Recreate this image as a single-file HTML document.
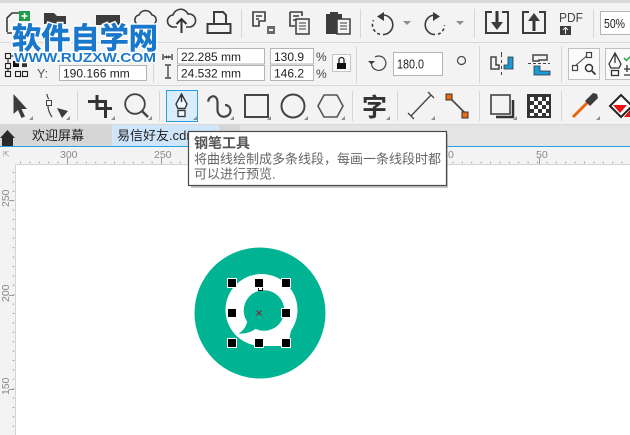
<!DOCTYPE html>
<html><head><meta charset="utf-8">
<style>
html,body{margin:0;padding:0;width:630px;height:435px;overflow:hidden;background:#fff}
svg{display:block;position:absolute;left:0;top:0}
text{font-family:"Liberation Sans","Noto Sans CJK SC",sans-serif}
.v{font-size:12.5px;fill:#222}
.ic{fill:none;stroke:#3c3c3c;stroke-width:1.6}
.d{fill:#3c3c3c;stroke:none}
.sep{stroke:#d6d6d6;stroke-width:1}
.box{fill:#fff;stroke:#b4b4b4;stroke-width:1}
.tri{fill:#8e8e8e}
.rl{font-size:10.5px;fill:#8a8a8a}
</style></head><body>
<svg width="630" height="435" viewBox="0 0 630 435">
<rect width="630" height="435" fill="#f3f3f3"/>
<rect width="630" height="3" fill="#d9d9d9"/>
<rect y="42" width="630" height="1" fill="#d8d8d8"/>
<rect y="85" width="630" height="1" fill="#d8d8d8"/>
<rect y="124" width="630" height="1" fill="#d8d8d8"/>

<!-- row 1 -->
<path class="ic" d="M7 32V18l5-5h10M7 33h5"/>
<rect x="19" y="11" width="11" height="10" fill="#1f9d48"/>
<path d="M24.500 13v6M21.500 16h6" stroke="#fff" stroke-width="1.500"/>
<path class="d" d="M44 13h10l3 3h9v8H44z"/>
<path class="d" d="M96 15h24v10H96z"/>
<path class="ic" d="M137 24a5 5 0 0 1 2-9 7 7 0 0 1 13 0 5 5 0 0 1 2 9"/>
<path class="ic" d="M177 27h-3a6 6 0 0 1-1-12 8 8 0 0 1 15-1 6.500 6.500 0 0 1 2 13h-4"/>
<path d="M181.500 33V20M176.500 24l5-5 5 5" fill="none" stroke="#333" stroke-width="2"/>
<path class="ic" style="stroke-width:2" d="M214 24V12h9l3 3v9M207.500 24v9h23v-9z"/>
<path class="sep" d="M241.500 9v29"/>
<path class="ic" d="M253 12h12v9h-6v5h-6zM256 16h6M256 19h3"/>
<path class="d" d="M267 26h8v8h-8z" opacity=".75"/><path d="M269 29h4v2h-4z" fill="#f3f3f3"/>
<path class="ic" d="M290 12h12v4M290 12v14h5M293 16h6M293 20h3"/>
<rect x="296" y="19" width="13" height="15" fill="#f3f3f3" stroke="#3c3c3c" stroke-width="1.500"/>
<path d="M299 23h7M299 26h7M299 29h7" stroke="#3c3c3c"/>
<path class="d" d="M326 14h4v-2h8v2h4v20h-16z"/>
<rect x="337" y="19" width="13" height="15" fill="#f3f3f3" stroke="#3c3c3c" stroke-width="1.500"/>
<path d="M340 23h7M340 26h7M340 29h7" stroke="#3c3c3c"/>
<path class="sep" d="M360.500 9v29"/>
<path d="M383 15a9.800 9.800 0 0 1 0 19.600" fill="none" stroke="#3c3c3c" stroke-width="1.600"/>
<path d="M380 34.300a9.800 9.800 0 0 1-6.500-14" fill="none" stroke="#3c3c3c" stroke-width="1.600" stroke-dasharray="3 2.500"/>
<path class="d" d="M384 12v9l-7-4.500z"/>
<path class="tri" d="M403 21h8l-4 4z"/>
<path d="M435 15a9.800 9.800 0 0 0 0 19.600" fill="none" stroke="#3c3c3c" stroke-width="1.600"/>
<path d="M438 34.300a9.800 9.800 0 0 0 6.500-9" fill="none" stroke="#3c3c3c" stroke-width="1.600" stroke-dasharray="3 2.500"/>
<path class="d" d="M433 12v9l7-4.500z"/>
<path class="tri" d="M456 21h8l-4 4z"/>
<path class="sep" d="M474.500 9v29"/>
<path class="ic" style="stroke-width:2" d="M492 12h-6v21h22V12h-6"/>
<path d="M497 11v13" stroke="#333" stroke-width="3"/><path class="d" d="M491 22h12l-6 8z"/>
<path class="ic" style="stroke-width:2" d="M529 12h-6v21h22V12h-6"/>
<path d="M534 20v11" stroke="#333" stroke-width="3"/><path class="d" d="M528 21h12l-6-8z"/>
<text x="559" y="22" font-size="12.500" fill="#444" textLength="24" lengthAdjust="spacingAndGlyphs">PDF</text>
<path class="d" d="M560 26h11v9h-11z"/><path d="M565.500 27v7M563 30l2.500-2.500 2.500 2.500" stroke="#f3f3f3" fill="none"/>
<path class="sep" d="M593.500 9v29"/>
<rect x="600.500" y="11.500" width="40" height="23" class="box"/>
<text x="604" y="28" class="v" style="font-size:12.500px" textLength="21" lengthAdjust="spacingAndGlyphs">50%</text>

<!-- row 2 -->
<g fill="none" stroke="#222" stroke-width="1.100">
<rect x="5.500" y="53.500" width="5" height="5"/><rect x="5.500" y="63.500" width="5" height="5"/><rect x="5.500" y="71.500" width="5" height="5"/>
<rect x="15.500" y="71.500" width="5" height="5"/><rect x="22.500" y="71.500" width="5" height="5"/>
<path d="M10 56h6M8 58v5M8 68v3"/>
</g>
<rect x="13" y="61" width="6" height="6" fill="#111"/><rect x="22" y="61" width="5" height="6" fill="#333"/>
<text x="37" y="78" font-size="12.500" fill="#555">Y:</text>
<rect x="59.500" y="65.500" width="87" height="15" class="box"/>
<text x="63" y="77.500" class="v" style="font-size:12px">190.166 mm</text>
<path class="sep" d="M153.500 47v36"/>
<path d="M163 54v6M172 54v6M164 57h7" stroke="#444" stroke-width="1.400"/>
<path d="M165 57l2-2v4zM170 57l-2-2v4z" fill="#444"/>
<path d="M165 65h6M165 78h6M168 66v11" stroke="#444" stroke-width="1.400"/>
<rect x="177.500" y="48.500" width="87" height="15.500" class="box"/>
<rect x="177.500" y="65.500" width="87" height="15" class="box"/>
<text x="181" y="61" class="v" style="font-size:12px">22.285 mm</text>
<text x="181" y="77.500" class="v" style="font-size:12px">24.532 mm</text>
<rect x="270.500" y="48.500" width="43" height="15.500" class="box"/>
<rect x="270.500" y="65.500" width="43" height="15" class="box"/>
<text x="274" y="61" class="v" style="font-size:12px">130.9</text>
<text x="274" y="77.500" class="v" style="font-size:12px">146.2</text>
<text x="316" y="61" font-size="12" fill="#444">%</text>
<text x="316" y="78" font-size="12" fill="#444">%</text>
<rect x="332.500" y="54.500" width="18" height="17" fill="#fafafa" stroke="#c4c4c4"/>
<path d="M339 63v-3a2.500 2.500 0 0 1 5 0v3" fill="none" stroke="#222" stroke-width="1.300"/>
<rect x="337" y="63" width="9" height="6" fill="#111"/>
<path class="sep" d="M356.500 46v37"/>
<path d="M375 57a7.200 7.200 0 1 1-3.500 7" fill="none" stroke="#444" stroke-width="1.200"/>
<path class="d" d="M368 61h7l-3.500 3.500z"/>
<rect x="393.500" y="52.500" width="49" height="23" class="box"/>
<text x="397" y="68.500" class="v" style="font-size:13px" textLength="27" lengthAdjust="spacingAndGlyphs">180.0</text>
<circle cx="461.500" cy="60.500" r="4" fill="none" stroke="#444" stroke-width="1.200"/>
<path class="sep" d="M479.500 46v37"/>
<path d="M491 57h5v8h3v4h-8z" fill="none" stroke="#444" stroke-width="1.500"/>
<path d="M501.500 52v5M501.500 60v3M501.500 66v3M501.500 72v3" stroke="#444"/>
<path d="M508 57h5v12h-9v-4h4z" fill="#1c9ad6" stroke="#333" stroke-width=".8"/>
<path d="M528 63.500h3M533 63.500h3M538 63.500h3M543 63.500h3M548 63.500h2" stroke="#444"/>
<path d="M533 55h14v5h-8v1h-6z" fill="none" stroke="#444" stroke-width="1.500"/>
<path d="M534 66h6v5h10v4h-16z" fill="#1c9ad6" stroke="#333" stroke-width=".8"/>
<path class="sep" d="M561.500 46v37"/>
<rect x="568.500" y="48.500" width="31" height="31" fill="#fafafa" stroke="#c0c0c0"/>
<path d="M575 66l14-12" stroke="#444"/>
<rect x="572.500" y="65.500" width="5" height="5" fill="#fafafa" stroke="#444" stroke-width="1.200"/>
<rect x="586.500" y="52.500" width="5" height="5" fill="#fafafa" stroke="#444" stroke-width="1.200"/>
<circle cx="589" cy="68" r="3.500" fill="none" stroke="#333" stroke-width="1.500"/><path d="M592 71l3.500 3.500" stroke="#333" stroke-width="1.800"/>
<rect x="605.500" y="48.500" width="31" height="31" fill="#fafafa" stroke="#c0c0c0"/>
<path d="M615 53l-6 11 2 4h8l2-4zM615 53v10" fill="none" stroke="#333" stroke-width="1.300"/>
<rect x="611.500" y="70.500" width="7" height="5" fill="none" stroke="#333" stroke-width="1.300"/>
<path d="M624 58l2.500 2.500 4-4" fill="none" stroke="#21a045" stroke-width="1.500"/>
<path d="M627 65v7M624 69h6M624 75h6" stroke="#333" stroke-width="1.300"/>

<!-- row 3 -->
<path class="d" d="M13.500 94v20l4.500-4 3.500 8 3.500-1.500-3.500-7.500h5.500z"/>
<path class="tri" d="M33 120h-4l4-4z"/>
<path d="M47 94c0 2 1 4 2 5M48 106c0 4 2 8 4 11" fill="none" stroke="#444" stroke-width="1.200"/>
<rect x="46.500" y="100.500" width="5" height="5" fill="#f3f3f3" stroke="#444"/>
<path class="d" d="M57 108l11 3-6 7z"/>
<path class="tri" d="M70 120h-4l4-4z"/>
<path class="sep" d="M77.500 91v30"/>
<path d="M97 95v13.500h15M88 101.500h17.500V118" fill="none" stroke="#333" stroke-width="3"/>
<path class="tri" d="M115 120h-4l4-4z"/>
<circle cx="135" cy="104" r="9.800" fill="none" stroke="#444" stroke-width="1.800"/>
<path d="M142 111l6 6" stroke="#444" stroke-width="2.500"/>
<path class="tri" d="M152 120h-4l4-4z"/>
<path class="sep" d="M159.500 91v30"/>
<rect x="166.500" y="90.500" width="31" height="31" fill="#d9edfc" stroke="#29a0e0" stroke-width="1"/>
<path d="M181.500 94l-5.500 10 2 4.500h7l2-4.500zM181.500 94v8" fill="#eef7fd" stroke="#333" stroke-width="1.400"/>
<rect x="178" y="110.500" width="7" height="6" fill="#eef7fd" stroke="#333" stroke-width="1.300"/>
<path class="tri" d="M197 120h-4l4-4z"/>
<path d="M208.300 101.700C208 96 217 93 217.500 102V110C218 120 231 118 230.500 110C230 107 228 105 225 105" fill="none" stroke="#444" stroke-width="2.200"/>
<path class="tri" d="M234 120h-4l4-4z"/>
<rect x="245" y="95" width="23" height="22" fill="none" stroke="#444" stroke-width="2"/>
<path class="tri" d="M271 120h-4l4-4z"/>
<circle cx="293" cy="106" r="11.500" fill="none" stroke="#444" stroke-width="2"/>
<path class="tri" d="M308 120h-4l4-4z"/>
<path d="M325 106l6-11h13l6 11-6 11h-13z" fill="none" stroke="#555" stroke-width="1.600" transform="translate(-7 0)"/>
<path class="tri" d="M345 120h-4l4-4z"/>
<path class="sep" d="M352.500 91v30"/>
<text x="362" y="116" font-size="25" font-weight="bold" fill="#333">字</text>
<path class="tri" d="M390 120h-4l4-4z"/>
<path class="sep" d="M397.500 91v30"/>
<path d="M411 116l20-21M408 113l6 6M428 92l6 6" stroke="#444" stroke-width="1.300" fill="none"/>
<path class="tri" d="M435 120h-4l4-4z"/>
<path d="M448 96l18 18" stroke="#444" stroke-width="1.600"/>
<rect x="446" y="94" width="6" height="6" fill="#ee6a0c" stroke="#333"/><rect x="462" y="112" width="6" height="6" fill="#ee6a0c" stroke="#333"/>
<path class="sep" d="M479.500 91v30"/>
<rect x="491" y="95" width="19" height="19" fill="none" stroke="#444" stroke-width="1.600"/>
<path d="M496 117h17V100" fill="none" stroke="#333" stroke-width="2.500"/>
<path class="tri" d="M517 120h-4l4-4z"/>
<rect x="527" y="94" width="24" height="24" fill="#333"/>
<g fill="#fff"><rect x="530" y="97" width="4" height="4"/><rect x="538" y="97" width="4" height="4"/><rect x="546" y="97" width="3" height="4"/><rect x="534" y="101" width="4" height="4"/><rect x="542" y="101" width="4" height="4"/><rect x="530" y="105" width="4" height="4"/><rect x="538" y="105" width="4" height="4"/><rect x="546" y="105" width="3" height="4"/><rect x="534" y="109" width="4" height="4"/><rect x="542" y="109" width="4" height="4"/><rect x="530" y="113" width="4" height="3"/><rect x="538" y="113" width="4" height="3"/><rect x="546" y="113" width="3" height="3"/></g>
<path class="sep" d="M561.500 91v30"/>
<path d="M573 117l15-15" stroke="#e8660e" stroke-width="3"/>
<path class="d" d="M585 101l8-8 4 1 1 4-8 8z"/>
<path class="tri" d="M600 120h-4l4-4z"/>
<path d="M610 106l11-11 11 11-11 11z" fill="#fff" stroke="#222" stroke-width="2"/>
<path d="M613 105h14l-7 8z" fill="#e81010"/><path d="M624 117l6-7v7z" fill="#e81010"/>

<!-- tabs -->
<rect y="125" width="630" height="21" fill="#e4e4e4"/>
<rect y="125" width="112" height="21" fill="#d6d6d6"/>
<rect x="113" y="125" width="106" height="21" fill="#cfe5fb"/>
<rect x="219" y="125" width="21" height="21" fill="#d6d6d6"/>
<rect y="146" width="630" height="1" fill="#27a0dc"/>
<path d="M0 138l7.500-8 7.500 8h-2v8H2v-8z" fill="#2a2a2a"/>
<text x="32" y="140" font-size="13" fill="#222">欢迎屏幕</text>
<text x="117" y="140" font-size="13" fill="#222">易信好友.cdr</text>

<!-- ruler -->
<rect y="147" width="630" height="18" fill="#f3f3f3"/>
<text x="3" y="157" font-size="8" fill="#999">⇱</text>
<text x="60" y="158" class="rl">300</text>
<text x="154" y="158" class="rl">250</text>
<text x="448" y="158" class="rl">0</text>
<text x="536" y="158" class="rl">50</text>
<path d="M67.500 158v6M161.500 158v6M539.500 158v6" stroke="#999"/>
<path d="M20 162.500H630" stroke="#9a9a9a" stroke-dasharray="1 8.400" stroke-width="1.500"/>
<rect x="15" y="164" width="615" height="271" fill="#fff"/>
<rect x="15" y="164" width="615" height="1" fill="#d4d4d4"/>
<rect x="15" y="164" width="1" height="271" fill="#d4d4d4"/>
<path d="M13.500 172V435" stroke="#9a9a9a" stroke-dasharray="1 8.400" stroke-width="1.500"/>
<path d="M9 200.500h5M9 295.500h5M9 389.500h5" stroke="#999"/>
<text transform="translate(9 207) rotate(-90)" class="rl">250</text>
<text transform="translate(9 302) rotate(-90)" class="rl">200</text>
<text transform="translate(9 395) rotate(-90)" class="rl">150</text>

<!-- logo -->
<circle cx="260" cy="313" r="65.500" fill="#00b493"/>
<circle cx="261.500" cy="310" r="36" fill="#fff"/>
<path d="M261 346H288L291 330L275 335z" fill="#fff"/>
<circle cx="264" cy="310.500" r="20.300" fill="#00b493"/>
<path d="M247 322C246 327 243 331 238.500 333.500C245 334 251 332.500 256 328.500z" fill="#00b493"/>
<path d="M258.500 288v2.500h4V288" fill="none" stroke="#111" stroke-width="1"/>
<path d="M256.500 310.500l5 5M261.500 310.500l-5 5" stroke="#7a2c3c" stroke-width="1.200"/>
<g fill="#000" stroke="#fff" stroke-width="1">
<rect x="227.500" y="278.500" width="9" height="9"/><rect x="254.500" y="278.500" width="9" height="9"/><rect x="281.500" y="278.500" width="9" height="9"/>
<rect x="227.500" y="308.500" width="9" height="9"/><rect x="281.500" y="308.500" width="9" height="9"/>
<rect x="227.500" y="338.500" width="9" height="9"/><rect x="254.500" y="338.500" width="9" height="9"/><rect x="281.500" y="338.500" width="9" height="9"/>
</g>

<!-- tooltip -->
<rect x="191" y="134" width="257" height="54" fill="#999" opacity=".55"/>
<rect x="188.500" y="131.500" width="258" height="54" fill="#fff" stroke="#4a4a4a" stroke-width="1.200"/>
<text x="194" y="148" font-size="14" font-weight="bold" fill="#555">钢笔工具</text>
<text x="194" y="163.500" font-size="13" fill="#666">将曲线绘制成多条线段，每画一条线段时都</text>
<text x="194" y="178.500" font-size="13" fill="#666">可以进行预览.</text>

<!-- watermark -->
<text x="12" y="48.500" font-size="29.500" font-weight="bold" fill="#1a78cc" stroke="#fff" stroke-width="3.500" paint-order="stroke" textLength="146" lengthAdjust="spacingAndGlyphs">软件自学网</text>
<text x="12" y="48.500" font-size="29.500" font-weight="bold" fill="#1a78cc" stroke="#1a78cc" stroke-width=".6" textLength="146" lengthAdjust="spacingAndGlyphs">软件自学网</text>
<text x="14" y="62" font-size="13" font-weight="bold" fill="#1a78cc" stroke="#fff" stroke-width="2.500" paint-order="stroke" textLength="142" lengthAdjust="spacingAndGlyphs">WWW.RUZXW.COM</text>
</svg>
</body></html>
